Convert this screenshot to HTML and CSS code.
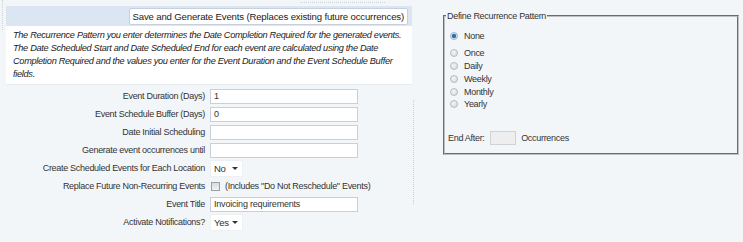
FILE: index.html
```html
<!DOCTYPE html>
<html lang="en">
<head>
  <meta charset="UTF-8" />
  <title>Recurrence</title>
  <link rel="stylesheet" href="styles.css">
</head>
<body>

<div class="page">
  <div class="grip grip-left"></div>

  <!-- Left column: options -->
  <div class="left">
    <div class="grip-top-row"><span class="grip grip-top"></span></div>
    <div class="toolbar">
      <button class="btn">Save and Generate Events (Replaces existing future occurrences)</button>
    </div>
    <p class="note">The Recurrence Pattern you enter determines the Date Completion Required for the generated events. The Date Scheduled Start and Date Scheduled End for each event are calculated using the Date Completion Required and the values you enter for the Event Duration and the Event Schedule Buffer fields.</p>

    <div class="form">
      <label class="lbl">Event Duration (Days)</label>
      <div class="field"><input type="text" class="input" value="1" /></div>

      <label class="lbl">Event Schedule Buffer (Days)</label>
      <div class="field"><input type="text" class="input" value="0" /></div>

      <label class="lbl">Date Initial Scheduling</label>
      <div class="field"><input type="text" class="input" /></div>

      <label class="lbl">Generate event occurrences until</label>
      <div class="field"><input type="text" class="input" /></div>

      <label class="lbl">Create Scheduled Events for Each Location</label>
      <div class="field"><span class="select">No <span class="caret"></span></span></div>

      <label class="lbl">Replace Future Non-Recurring Events</label>
      <div class="field"><span class="check"></span><span class="hint">(Includes "Do Not Reschedule" Events)</span></div>

      <label class="lbl">Event Title</label>
      <div class="field"><input type="text" class="input" value="Invoicing requirements" /></div>

      <label class="lbl">Activate Notifications?</label>
      <div class="field"><span class="select">Yes <span class="caret"></span></span></div>
    </div>
  </div>

  <div class="grip grip-mid"></div>

  <!-- Right column: pattern -->
  <div class="right">
    <fieldset class="pattern">
      <legend>Define Recurrence Pattern</legend>
      <div class="opt opt-first"><span class="radio on"></span>None</div>
      <div class="opt"><span class="radio"></span>Once</div>
      <div class="opt"><span class="radio"></span>Daily</div>
      <div class="opt"><span class="radio"></span>Weekly</div>
      <div class="opt"><span class="radio"></span>Monthly</div>
      <div class="opt"><span class="radio"></span>Yearly</div>
      <div class="end-after">End After: <span class="small-box"></span>  Occurrences</div>
    </fieldset>
  </div>
</div>

</body>
</html>
```

FILE: styles.css
```css
* {
  margin: 0;
  padding: 0;
  box-sizing: border-box;
}

body {
  background-color: #f3f6f9;
  font-family: "Liberation Sans", Arial, sans-serif;
  font-size: 9px;
  letter-spacing: -0.3px;
  color: #333;
}

.page {
  display: flex;
  align-items: flex-start;
}

/* splitter grips */
.grip-left {
  width: 6px;
  height: 30px;
  border-left: 1px dotted #ccd3db;
  margin-left: 2px;
  margin-right: -2px;
}

.left {
  width: 406px;
}

.grip-top-row {
  height: 6px;
  display: flex;
  justify-content: flex-end;
  padding-right: 27px;
}

.grip-top {
  width: 85px;
  height: 3px;
  margin-top: 2px;
  border-top: 1px dotted #ccd3db;
}

.grip-mid {
  width: 3px;
  height: 105px;
  margin-top: 100px;
  margin-left: 1px;
  border-left: 1px dotted #c8ced6;
}

.toolbar {
  height: 20px;
  background-color: #dce6f3;
  display: flex;
  justify-content: flex-end;
  align-items: center;
  padding-right: 4px;
}

.btn {
  font-family: inherit;
  font-size: 9.6px;
  letter-spacing: -0.16px;
  color: #222;
  background-color: #fff;
  border: 1px solid #c7d0dc;
  border-radius: 2px;
  height: 17px;
  padding: 0 3px;
}

.note {
  background-color: #fff;
  font-style: italic;
  font-size: 9.2px;
  letter-spacing: -0.3px;
  line-height: 13px;
  padding: 3px 3px 3px 7px;
  color: #222;
  border-bottom: 1px solid #e6ebf0;
}

.form {
  display: grid;
  grid-template-columns: 199px 1fr;
  column-gap: 5px;
  grid-auto-rows: 18px;
  margin-top: 2px;
}

.lbl {
  text-align: right;
  align-self: center;
  white-space: nowrap;
  color: #333;
}

.field {
  display: flex;
  align-items: center;
}

.input {
  width: 148px;
  height: 15px;
  border: 1px solid #c9d0da;
  background-color: #fff;
  font-family: inherit;
  font-size: 9px;
  letter-spacing: -0.2px;
  color: #333;
  padding: 0 3px;
  outline: none;
}

.select {
  display: inline-flex;
  align-items: center;
  width: 33px;
  height: 17px;
  background-color: #fff;
  border: 1px solid #eef1f4;
  padding: 0 3px;
  font-size: 9.5px;
  white-space: pre;
}

.caret {
  width: 0;
  height: 0;
  margin-left: auto;
  margin-right: 1px;
  border-left: 3px solid transparent;
  border-right: 3px solid transparent;
  border-top: 3px solid #333;
}

.check {
  width: 9px;
  height: 9px;
  margin-left: 1px;
  border: 1px solid #9aa0a6;
  background: linear-gradient(#d8dadc, #f2f3f4);
}

.hint {
  margin-left: 5px;
}

.right {
  margin-left: 27px;
  margin-top: 10px;
  width: 296px;
}

.pattern {
  border: 2px groove #c0c0c0;
  padding: 0 0 8px 3px;
}

.pattern legend {
  padding: 0 1px;
  margin-left: -2px;
  line-height: 12px;
}

.opt {
  display: flex;
  align-items: center;
  height: 12.8px;
  padding-left: 2px;
}

.opt-first {
  margin-top: 8px;
  margin-bottom: 4px;
}

.radio {
  width: 8px;
  height: 8px;
  border-radius: 50%;
  border: 1px solid #b7bbbf;
  background: radial-gradient(circle at 40% 35%, #f4f5f6, #d3d6d9);
  margin-right: 6px;
}

.radio.on {
  border-color: #9fb3c8;
  background: radial-gradient(circle, #2f6fb0 0, #2f6fb0 1.8px, #dfe7ef 2.6px, #c9d3dd 4px);
}

.end-after {
  display: flex;
  align-items: center;
  margin-top: 20px;
  height: 14px;
  white-space: pre;
}

.small-box {
  display: inline-block;
  width: 26px;
  height: 14px;
  border: 1px solid #cfd3d8;
  background-color: #eeeeee;
  margin: 0 1px 0 3px;
}
```
